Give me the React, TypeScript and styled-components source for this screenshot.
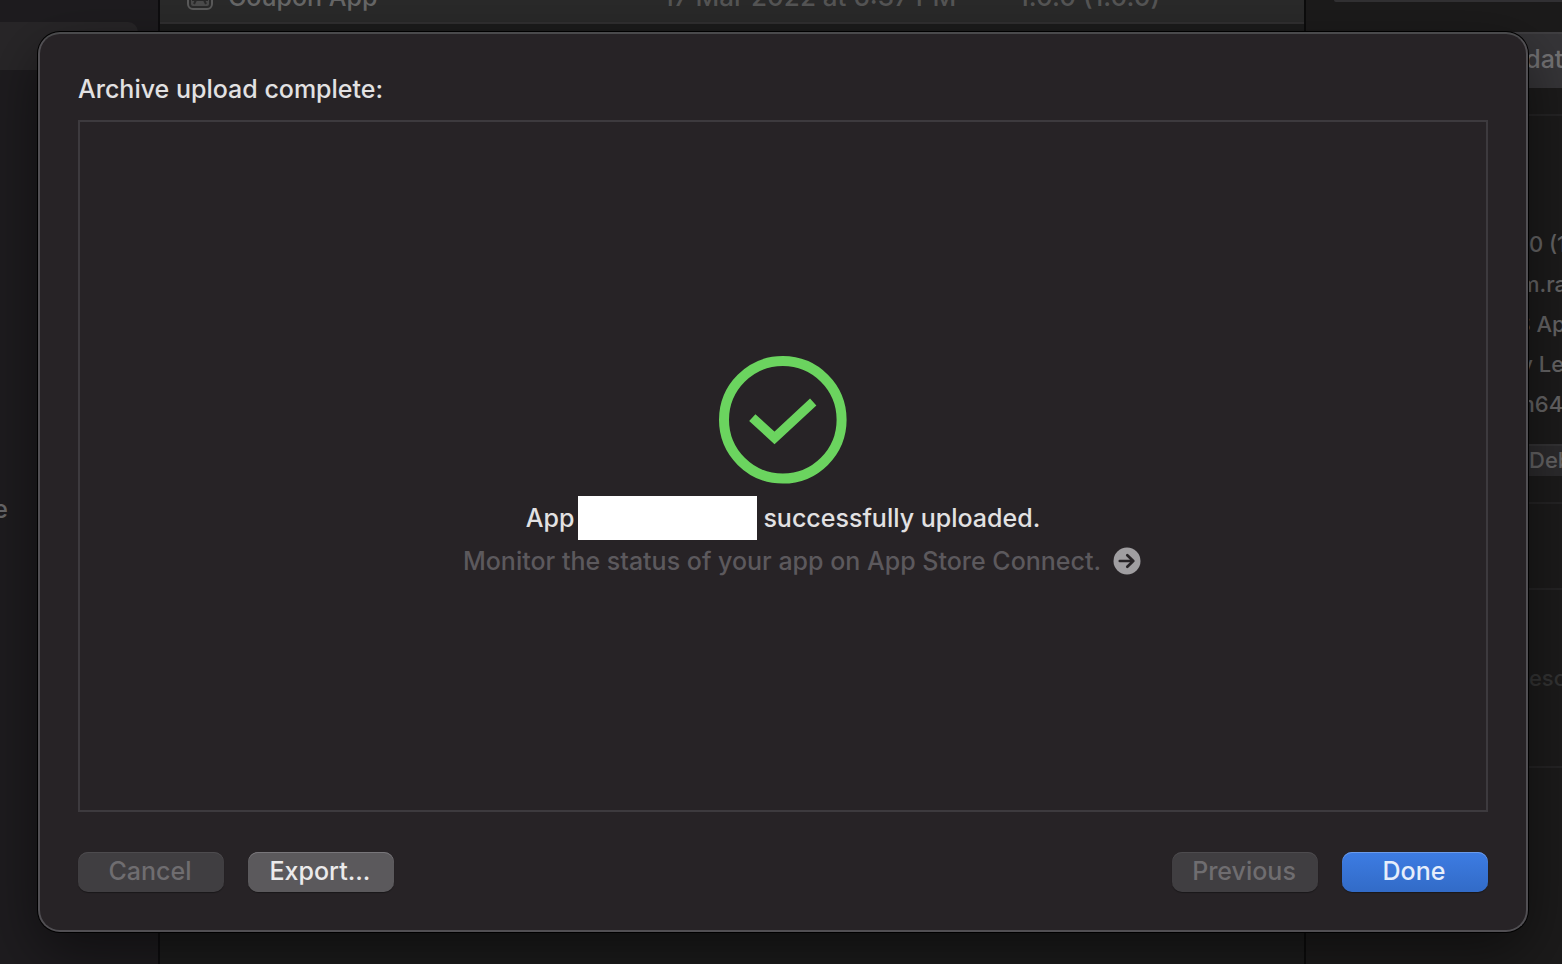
import React from "react";
import styled, { createGlobalStyle } from "styled-components";

const GlobalStyle = createGlobalStyle`
  * { box-sizing: border-box; }
  body {
    margin: 0;
    background: #151515;
    font-family: Inter, "Liberation Sans", sans-serif;
    font-weight: 500;
  }
  button { font-family: inherit; font-weight: inherit; }
`;

const Window = styled.div`
  position: relative;
  display: grid;
  grid-template-columns: 160px minmax(0, 1fr) 258px;
  min-height: 100vh;
  overflow: hidden;
`;

const Sidebar = styled.nav`
  background: #1e1c1f;
  border-right: 2px solid #0e0d0f;
  padding-top: 22px;
  overflow: hidden;
`;

const SidebarSelection = styled.div`
  width: 138px;
  height: 48px;
  background: #282628;
  border-radius: 0 10px 10px 0;
`;

const SidebarItem = styled.div`
  margin-top: 423px;
  width: 8px;
  display: flex;
  justify-content: flex-end;
  font-size: 25px;
  line-height: 32px;
  color: #6a696b;
`;

const ArchiveList = styled.main`
  background: #1c1c1c;
  min-width: 0;
`;

const ListViewport = styled.div`
  display: flex;
  flex-direction: column;
  justify-content: flex-end;
  height: 24px;
  overflow: hidden;
`;

const ArchiveRow = styled.div`
  flex: none;
  display: grid;
  grid-template-columns: 26px 450px 355px 1fr;
  align-items: center;
  height: 52px;
  padding-left: 27px;
  background: #2a2a2a;
  border-bottom: 2px solid #323132;
  color: #565656;
  font-size: 26px;
  line-height: 32px;
  white-space: nowrap;
`;

const ArchiveName = styled.span`
  padding-left: 15px;
  color: #686868;
  font-size: 25px;
`;

const Inspector = styled.aside`
  background: #1c1b1b;
  border-left: 2px solid #0c0c0c;
  overflow: hidden;
  color: #666566;
  font-size: 22px;
  white-space: nowrap;
`;

const Section = styled.section<{ $height: number }>`
  display: flex;
  flex-direction: column;
  height: ${(p) => p.$height}px;
  border-bottom: 2px solid #252425;
  padding-left: 28px;
`;

const ActionEdge = styled.div`
  height: 2px;
  margin-bottom: 30px;
  background: #323134;
  border-radius: 0 0 0 8px;
`;

const ActionButton = styled.button`
  height: 56px;
  padding: 0 0 4px 148px;
  border: 0;
  border-top: 2px solid #403f42;
  border-radius: 12px 0 0 12px;
  background: #363538;
  color: #747375;
  font-size: 25px;
  text-align: left;
`;

const Details = styled.ul`
  list-style: none;
  margin: 108px 0 20px;
  padding: 0 0 0 160px;
  line-height: 40px;
`;

const DebugButton = styled.button`
  height: 32px;
  margin-left: 130px;
  padding: 0 0 2px 65px;
  border: 0;
  border-top: 2px solid #343335;
  background: #2c2b2d;
  color: #666566;
  font-size: 22px;
  line-height: 28px;
  text-align: left;
`;

const Description = styled.p`
  margin: auto 0;
  padding-left: 179px;
  color: #343434;
  line-height: 28px;
`;

const Overlay = styled.div`
  position: absolute;
  inset: 0;
  display: flex;
  padding: 32px 34px 32px 38px;
`;

const Dialog = styled.div`
  flex: 1;
  display: flex;
  flex-direction: column;
  min-width: 0;
  padding: 38px;
  border: 2px solid #514f53;
  border-top-color: #4a4a4c;
  border-radius: 22px;
  background: #272326;
  box-shadow: 0 0 0 1px #000, 0 20px 60px rgba(0, 0, 0, 0.5);
`;

const Title = styled.h1`
  margin: 0 0 14px;
  color: #e2e1e2;
  font-size: 25px;
  font-weight: 500;
  line-height: 34px;
`;

const ResultPanel = styled.div`
  flex: 1;
  display: flex;
  flex-direction: column;
  align-items: center;
  justify-content: center;
  padding-top: 6px;
  border: 2px solid #3d3a3e;
`;

const Message = styled.p`
  display: flex;
  align-items: center;
  margin: 12px 0 0;
  height: 44px;
  color: #e2e1e2;
  font-size: 25px;
  line-height: 44px;
  white-space: nowrap;
`;

const Redaction = styled.span`
  width: 179px;
  height: 44px;
  margin: 0 6px 0 4px;
  background: #fff;
`;

const Monitor = styled.a`
  display: flex;
  align-items: center;
  gap: 12px;
  margin-left: 38px;
  color: #5c595d;
  font-size: 25px;
  line-height: 42px;
  text-decoration: none;
  white-space: nowrap;
`;

const Footer = styled.footer`
  display: flex;
  gap: 24px;
  margin-top: 40px;
`;

const Spacer = styled.div`
  flex: 1;
`;

const looks = {
  normal: { background: "#5b595c", edge: "#78767a", color: "#ebeaeb" },
  disabled: { background: "#403e41", edge: "#4d4b4e", color: "#6f6d70" },
  primary: {
    background: "linear-gradient(#3d7ce3, #326bc7)",
    edge: "#6b9bea",
    color: "#e6eefb",
  },
};

const PushButton = styled.button<{ $look: keyof typeof looks }>`
  width: 146px;
  height: 40px;
  padding: 0 2px 2px 0;
  border: 0;
  border-radius: 10px;
  background: ${(p) => looks[p.$look].background};
  box-shadow: inset 0 1px 0 ${(p) => looks[p.$look].edge}, 0 1px 1px rgba(0, 0, 0, 0.35);
  color: ${(p) => looks[p.$look].color};
  font-size: 25px;
  line-height: 38px;
`;

const AppIcon = () => (
  <svg width="26" height="26" viewBox="0 0 26 26" fill="none" stroke="#5b5b5b" strokeWidth="2">
    <rect x="1" y="1" width="24" height="24" rx="5" />
    <rect x="4" y="4" width="18" height="18" rx="2" fill="#4c4c4c" stroke="none" />
    <path d="M7 20 14 6M12 6l7 14M5 16h16" stroke="#2a2a2a" />
  </svg>
);

const SuccessIcon = () => (
  <svg width="128" height="128" viewBox="0 0 128 128" fill="none" stroke="#6bd45f">
    <circle cx="63.800" cy="63.800" r="58.800" strokeWidth="10" />
    <path d="M33.300 61.600 55.500 81.900 94.200 46" strokeWidth="9.300" />
  </svg>
);

const ArrowIcon = () => (
  <svg width="28" height="28" viewBox="0 0 28 28" fill="none">
    <circle cx="14" cy="14" r="13.500" fill="#a09ea1" />
    <path
      d="M6.800 14h13.500M14.300 8.200 20.300 14 14.300 19.800"
      stroke="#272326"
      strokeWidth="2.700"
      strokeLinecap="round"
      strokeLinejoin="round"
    />
  </svg>
);

export default function App() {
  return (
    <Window>
      <GlobalStyle />
      <Sidebar>
        <SidebarSelection />
        <SidebarItem>e</SidebarItem>
      </Sidebar>
      <ArchiveList>
        <ListViewport>
          <ArchiveRow>
            <AppIcon />
            <ArchiveName>Coupon App</ArchiveName>
            <span>17 Mar 2022 at 6:37 PM</span>
            <span>1.0.0 (1.0.0)</span>
          </ArchiveRow>
        </ListViewport>
      </ArchiveList>
      <Inspector>
        <Section $height={116}>
          <ActionEdge />
          <ActionButton>Validate</ActionButton>
        </Section>
        <Section $height={388}>
          <Details>
            <li>1.0.0 (1.0.0)</li>
            <li>com.ra</li>
            <li>iOS App</li>
            <li>Ray Le</li>
            <li>arm64</li>
          </Details>
          <DebugButton>Debug</DebugButton>
        </Section>
        <Section $height={86} />
        <Section $height={178}>
          <Description>Description</Description>
        </Section>
      </Inspector>
      <Overlay>
        <Dialog role="dialog" aria-labelledby="dialog-title">
          <Title id="dialog-title">Archive upload complete:</Title>
          <ResultPanel>
            <SuccessIcon />
            <Message>
              App
              <Redaction />
              successfully uploaded.
            </Message>
            <Monitor href="#">
              Monitor the status of your app on App Store Connect.
              <ArrowIcon />
            </Monitor>
          </ResultPanel>
          <Footer>
            <PushButton $look="disabled" disabled>Cancel</PushButton>
            <PushButton $look="normal">Export...</PushButton>
            <Spacer />
            <PushButton $look="disabled" disabled>Previous</PushButton>
            <PushButton $look="primary">Done</PushButton>
          </Footer>
        </Dialog>
      </Overlay>
    </Window>
  );
}
